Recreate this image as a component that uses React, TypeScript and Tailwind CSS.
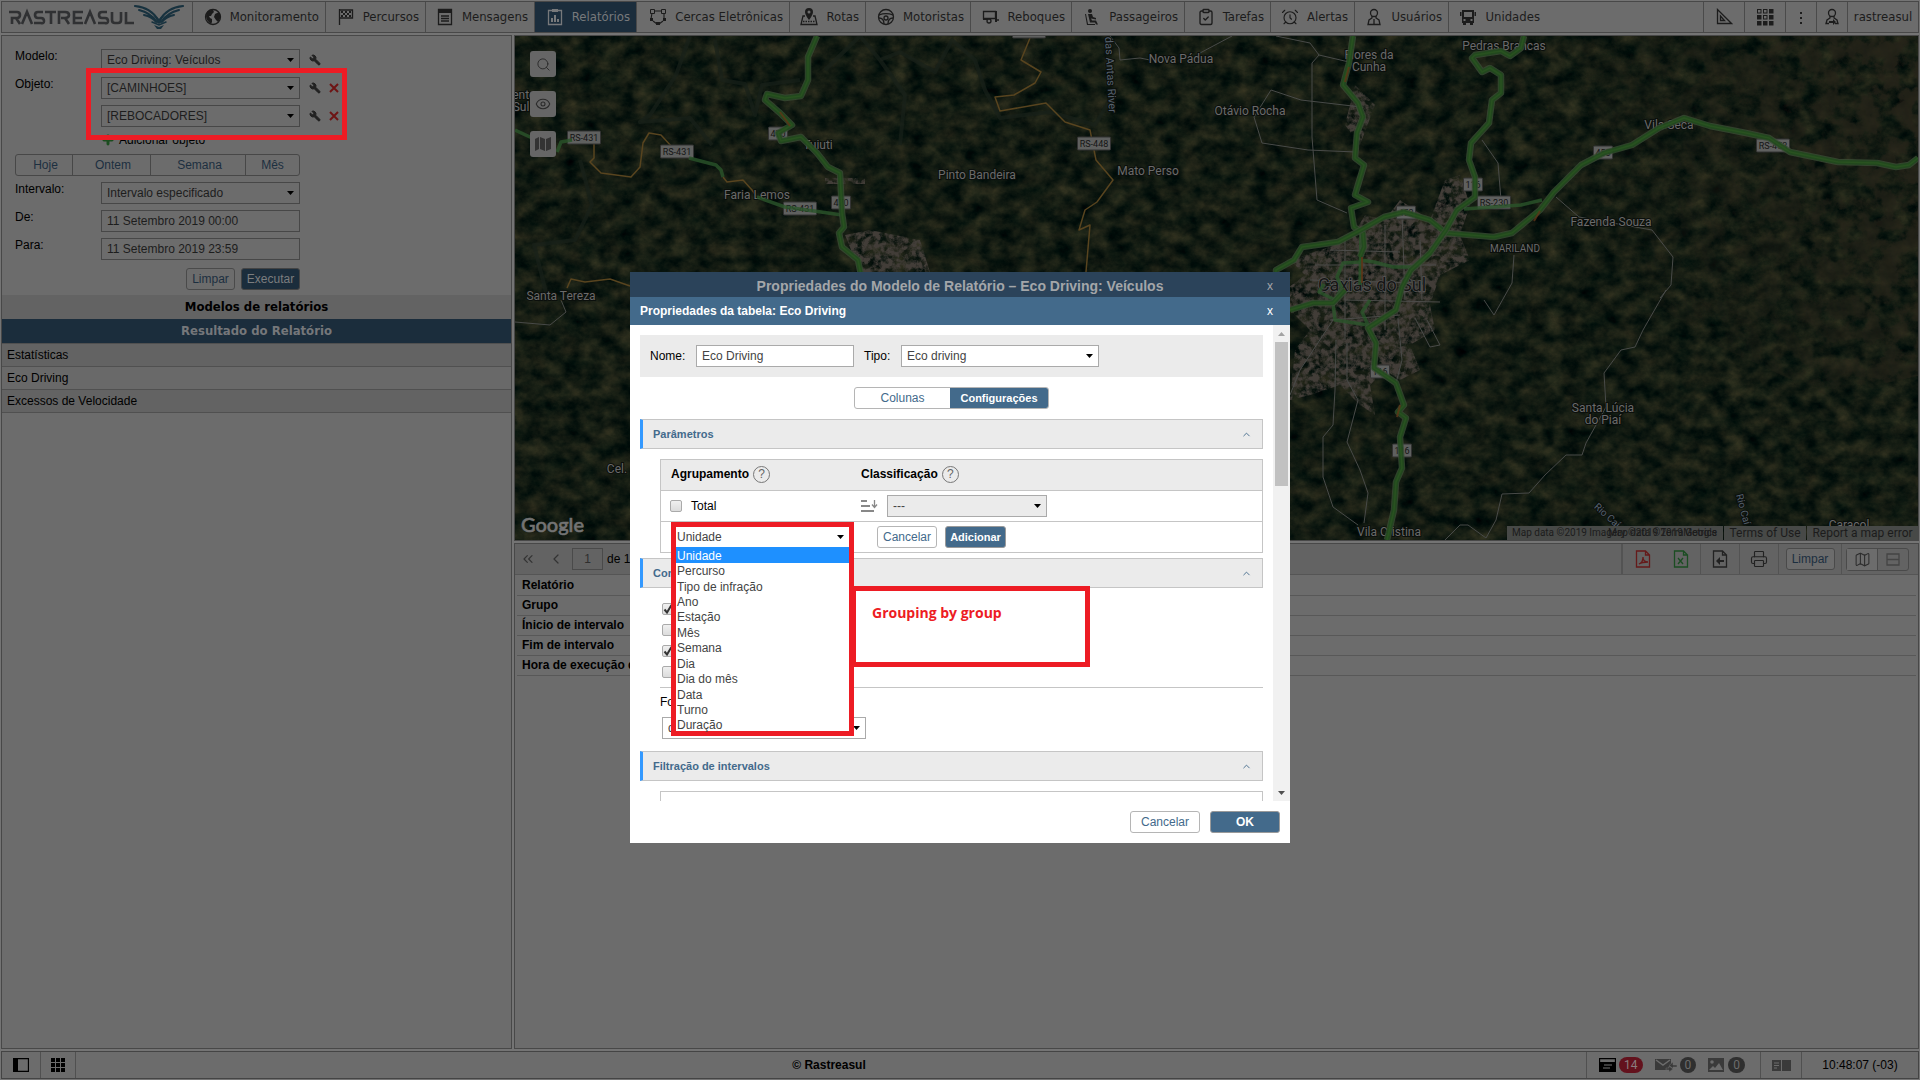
import type { ReactNode } from "react";
import {
  AlarmClock,
  ChevronLeft,
  ChevronsLeft,
  ChevronUp,
  ClipboardCheck,
  Eye,
  Map as MapIcon,
  Plus,
  Printer,
  Search,
  Wrench,
} from "lucide-react";

const stroke = { fill: "none", stroke: "currentColor", strokeWidth: 1.3 };

function Svg({ children, w = 18, h = 18, className = "" }: { children: ReactNode; w?: number; h?: number; className?: string }) {
  return (
    <svg width={w} height={h} viewBox={`0 0 ${w} ${h}`} className={`shrink-0 ${className}`} aria-hidden="true">
      {children}
    </svg>
  );
}

const icons = {
  globe: (
    <Svg>
      <circle cx="9" cy="9" r="7.5" {...stroke} />
      <path d="M3 4c2-2 4-2 6-2l1 2-2 2-1 2-2 0 1 2 2 1 0 3-1 2C4 14 2 11 2 8zM11 6l4-2c2 3 2 7-1 10l-2-2-2-3z" fill="currentColor" />
    </Svg>
  ),
  flag: (
    <Svg>
      <path d="M2.5 1v16M2.5 2h13v8h-13" {...stroke} />
      <path d="M4 3h2v2H4zM8 3h2v2H8zM12 3h2v2h-2zM6 5h2v2H6zM10 5h2v2h-2zM4 7h2v2H4zM8 7h2v2H8zM12 7h2v2h-2z" fill="currentColor" />
    </Svg>
  ),
  message: (
    <Svg>
      <path d="M2.5 1.5h13v15h-13zM5 8h8M5 10.500h8M5 13h8" {...stroke} />
      <path d="M2 1h14v4H2z" fill="currentColor" />
    </Svg>
  ),
  report: (
    <Svg>
      <path d="M2.500 2.500h13v14h-13z" {...stroke} />
      <path d="M6 1h6v3H6zM5 10h2v4H5zM8 7h2v7H8zM11 11h2v3h-2z" fill="currentColor" />
    </Svg>
  ),
  fence: (
    <Svg>
      <path d="M3 3h12M3 5l-1 6M15 5l0 6M4 13l4 3M14 13l-4 3" {...stroke} strokeWidth={1.1} />
      <path d="M1.500 1.500h4v4h-4zM12.500 1.500h4v4h-4z" fill="#6c6c6c" stroke="currentColor" />
      <path d="M1 10h3v3H1zM14 10h3v3h-3zM7 14h4v3H7z" fill="currentColor" />
    </Svg>
  ),
  route: (
    <Svg>
      <path d="M5 8H3L1 16.500h16L15 8h-2" {...stroke} />
      <path d="M3 13.500h12" {...stroke} strokeDasharray="1.500 1" />
      <path d="M9 0a4 4 0 0 1 4 4c0 3-4 8-4 8S5 7 5 4a4 4 0 0 1 4-4zm0 2.500a1.500 1.500 0 1 0 0 3 1.500 1.500 0 0 0 0-3z" fill="currentColor" fillRule="evenodd" />
    </Svg>
  ),
  wheel: (
    <Svg>
      <circle cx="9" cy="9" r="7.500" {...stroke} />
      <circle cx="9" cy="10" r="2" {...stroke} />
      <path d="M2 7c4-1.500 10-1.500 14 0M2 10c3 0 5 2 5 6M16 10c-3 0-5 2-5 6" {...stroke} />
    </Svg>
  ),
  trailer: (
    <Svg>
      <path d="M1.500 3.500h12v7h-12zM14 12h3" {...stroke} />
      <path d="M13 3h2v11h-2zM1 10h4v2H1z" fill="currentColor" />
      <circle cx="7" cy="13" r="2" {...stroke} />
    </Svg>
  ),
  passenger: (
    <Svg>
      <circle cx="7" cy="3" r="2" fill="currentColor" />
      <path d="M5 6l4 0 1 3 3 1v1.500l-5-1 1 2 4 0 2 4h-2l-1-2H7zM3 6l2 10h7v1H4L2 6z" fill="currentColor" />
    </Svg>
  ),
  user: (
    <Svg>
      <circle cx="9" cy="5" r="3.500" {...stroke} />
      <path d="M7 8v2l-3 2-1 4.500h12L14 12l-3-2V8M9 11v5" {...stroke} />
    </Svg>
  ),
  bus: (
    <Svg>
      <path d="M3 2h12v13h-1v2h-3v-2H7v2H4v-2H3zm2 2v5h8V4zM1 4h1.500v4H1zM15.500 4H17v4h-1.500zM4.500 11v2h2v-2zM11.500 11v2h2v-2z" fill="currentColor" fillRule="evenodd" />
    </Svg>
  ),
};

const navItems = [
  { label: "Monitoramento", icon: icons.globe, width: "w-[133px]" },
  { label: "Percursos", icon: icons.flag, width: "w-[100px]" },
  { label: "Mensagens", icon: icons.message, width: "w-[109px]" },
  { label: "Relatórios", icon: icons.report, width: "w-[102px]", active: true },
  { label: "Cercas Eletrônicas", icon: icons.fence, width: "w-[153px]" },
  { label: "Rotas", icon: icons.route, width: "w-[76px]" },
  { label: "Motoristas", icon: icons.wheel, width: "w-[105px]" },
  { label: "Reboques", icon: icons.trailer, width: "w-[101px]" },
  { label: "Passageiros", icon: icons.passenger, width: "w-[113px]" },
  { label: "Tarefas", icon: <ClipboardCheck size={18} strokeWidth={1.8} />, width: "w-[86px]" },
  { label: "Alertas", icon: <AlarmClock size={18} strokeWidth={1.5} />, width: "w-[84px]" },
  { label: "Usuários", icon: icons.user, width: "w-[94px]" },
  { label: "Unidades", icon: icons.bus, width: "w-[97px]", last: true },
];

function Logo() {
  return (
    <a href="#" aria-label="Rastreasul" className="flex w-[191px] shrink-0 items-center border-r border-[#4a4a4a] pl-[6px]">
      <svg width="178" height="26" viewBox="0 0 178 26" aria-hidden="true">
        <g fill="none" stroke="#303133" strokeWidth="2.600">
          <path d="M1 8h8q3 0 3 3t-3 3H4v6M8 14l4 6M14 20l5-12 5 12M35 8h-5q-3 0-3 3t3 3h3q3 0 3 3t-3 2h-7M37 8h11M43 8v12M51 20V8h6q4 0 4 3t-4 3h-4M57 14l4 6M75 8h-9v11h9M66 14h8M77 20l5-12 5 12M99 8h-5q-3 0-3 3t3 3h3q3 0 3 3t-3 2h-7M104 8v8q0 3 3 3h3q3 0 3-3V8M118 8v11h8" />
        </g>
        <g fill="none" stroke="#18323f" strokeLinecap="round">
          <path d="M127 2c10 1 18 5 23 14M175 2c-10 1-18 5-23 14" strokeWidth="2.200" />
          <path d="M131 6c8 2 13 5 17 11M171 6c-8 2-13 5-17 11M136 11c5 1 9 3 12 7M166 11c-5 1-9 3-12 7" strokeWidth="2" />
          <path d="M144 18l7 3 7-3" strokeWidth="1.500" />
        </g>
        <path d="M149 13l2 2 2-2 1 5-3 2-3-2zM146 21l5 2 5-2-3 4h-4z" fill="#18323f" />
      </svg>
    </a>
  );
}

// filled squares of the 3x3 apps glyph
const appSquares = [false, false, true, true, false, true, true, true, true];

function TopBar() {
  return (
    <header className="m-px flex h-8 border border-[#484848] bg-[#6c6c6c] font-['DejaVu_Sans_Condensed','DejaVu_Sans',sans-serif] text-[13px] text-[#1c1c1c]">
      <Logo />
      <nav className="flex min-w-0 flex-1">
        {navItems.map((item) => (
          <a
            key={item.label}
            href="#"
            className={`flex shrink-0 items-center justify-end gap-2 whitespace-nowrap pr-[6px] ${item.width} ${
              item.active ? "bg-[#1b2d3c] text-[#77797b]" : ""
            } ${item.last ? "" : "border-r border-[#4a4a4a]"}`}
          >
            {item.icon}
            {item.label}
          </a>
        ))}
      </nav>
      <button aria-label="Ferramentas" className="flex w-[41px] items-center justify-center border-l border-[#4a4a4a]">
        <Svg>
          <path d="M2.500 1.500v14h14zM5.500 8v4.500h4z" {...stroke} />
        </Svg>
      </button>
      <button aria-label="Aplicativos" className="flex w-[41px] items-center justify-center border-l border-[#4a4a4a]">
        <Svg w={17} h={17}>
          {appSquares.map((filled, i) => (
            <rect key={i} x={0.5 + (i % 3) * 6} y={0.5 + Math.floor(i / 3) * 6} width="3.500" height="3.500" fill={filled ? "currentColor" : "none"} stroke="currentColor" />
          ))}
        </Svg>
      </button>
      <button aria-label="Mais" className="flex w-[31px] items-center justify-center border-l border-[#4a4a4a]">
        <Svg w={4}>
          <path d="M1 4h2v2H1zM1 9h2v2H1zM1 14h2v2H1z" fill="currentColor" />
        </Svg>
      </button>
      <button aria-label="Conta" className="flex w-[31px] items-center justify-center border-l border-[#4a4a4a]">
        <Svg>
          <circle cx="9" cy="5" r="3.500" {...stroke} />
          <path d="M7 8v2l-3 2-1 3.500h3M11 8v2l3 2 1 3.500h-3" {...stroke} />
          <path d="M6 13h4v-2l3 3-3 3v-2H6z" fill="currentColor" />
        </Svg>
      </button>
      <a href="#" className="flex w-[71px] items-center justify-center border-l border-[#4a4a4a]">
        rastreasul
      </a>
    </header>
  );
}

function Caret({ className = "" }: { className?: string }) {
  return (
    <svg width="7" height="4" viewBox="0 0 7 4" className={`pointer-events-none absolute top-1/2 -mt-[2px] ${className || "right-[6px]"}`} aria-hidden="true">
      <path d="M0 0h7L3.500 4z" fill="#000" />
    </svg>
  );
}

function Select({ id, value, className = "", label }: { id?: string; value: string; className?: string; label?: string }) {
  return (
    <div className={`relative h-[22px] shrink-0 ${className}`}>
      <select id={id} aria-label={label} defaultValue={value} className="h-full w-full appearance-none border border-inherit bg-transparent px-[5px] outline-none">
        <option>{value}</option>
      </select>
      <Caret />
    </div>
  );
}

function ObjectTools({ removable = false }: { removable?: boolean }) {
  return (
    <>
      <button aria-label="Configurar" className="ml-[9px]">
        <Wrench size={12} fill="currentColor" className="-scale-x-100 text-[#222]" />
      </button>
      {removable && (
        <button aria-label="Remover" className="ml-2">
          <Svg w={10} h={10}>
            <path d="M1 1l8 8M9 1L1 9" stroke="#6e1414" strokeWidth="2" />
          </Svg>
        </button>
      )}
    </>
  );
}

function FormRow({ label, id, children }: { label?: string; id: string; children: ReactNode }) {
  return (
    <div className="flex h-7 items-start">
      <label htmlFor={id} className="w-[86px] shrink-0">
        {label}
      </label>
      <div className="flex h-[22px] items-center">{children}</div>
    </div>
  );
}

const darkField = "w-[199px] border-[#474747] text-[#1d1d1d]";

function ReportPanel() {
  return (
    <aside className="flex w-[511px] shrink-0 flex-col border border-[#484848] bg-[#6c6c6c]">
      <form className="px-[13px] pt-[13px]" onSubmit={(e) => e.preventDefault()}>
        <FormRow label="Modelo:" id="modelo">
          <Select id="modelo" value="Eco Driving: Veículos" className={darkField} />
          <ObjectTools />
        </FormRow>
        <div className="relative">
          <FormRow label="Objeto:" id="objeto-1">
            <Select id="objeto-1" value="[CAMINHOES]" className={darkField} />
            <ObjectTools removable />
          </FormRow>
          <FormRow id="objeto-2">
            <Select id="objeto-2" label="Objeto 2" value="[REBOCADORES]" className={darkField} />
            <ObjectTools removable />
          </FormRow>
          <div className="absolute -top-[9px] left-[71px] z-10 h-[72px] w-[261px] border-5 border-[#ed1c24]" />
        </div>
        <button className="ml-[86px] flex h-[21px] items-start gap-1">
          <Plus size={14} strokeWidth={5} className="text-[#1b4d1f]" />
          Adicionar objeto
        </button>
        <div className="flex h-[22px] w-[285px] rounded-[3px] border border-[#474747] text-[#1c2f40]">
          <button className="w-14 pl-[3px]">Hoje</button>
          <button className="w-[78px] border-l border-[#474747] pl-[3px]">Ontem</button>
          <button className="w-[95px] border-l border-[#474747] pl-[3px]">Semana</button>
          <button className="flex-1 border-l border-[#474747]">Mês</button>
        </div>
        <div className="pt-[6px]">
          <FormRow label="Intervalo:" id="intervalo">
            <Select id="intervalo" value="Intervalo especificado" className={darkField} />
          </FormRow>
          <FormRow label="De:" id="de">
            <input id="de" defaultValue="11 Setembro 2019 00:00" className={`h-[22px] border px-[5px] ${darkField}`} />
          </FormRow>
          <FormRow label="Para:" id="para">
            <input id="para" defaultValue="11 Setembro 2019 23:59" className={`h-[22px] border px-[5px] ${darkField}`} />
          </FormRow>
        </div>
        <div className="mt-[2px] mb-[5px] flex w-[285px] justify-end gap-[6px]">
          <button className="h-[22px] w-[49px] rounded-[3px] border border-[#4a4a4a] text-[#1c2f40]">Limpar</button>
          <button className="h-[22px] w-[59px] rounded-[3px] border border-[#444] bg-[#1b2d3c] text-[#7b7d7f]">Executar</button>
        </div>
      </form>
      <div className="font-['DejaVu_Sans_Condensed','DejaVu_Sans',sans-serif] text-[13px] font-bold leading-6 text-black">
        <h2 className="bg-[#636363] text-center">Modelos de relatórios</h2>
        <h2 className="bg-[#1b2d3c] text-center text-[#75777a]">Resultado do Relatório</h2>
      </div>
      <ul className="border-t border-[#505050] leading-[22px] text-black">
        {["Estatísticas", "Eco Driving", "Excessos de Velocidade"].map((name) => (
          <li key={name} className="border-b border-[#505050] px-[5px] odd:bg-[#636363] even:bg-[#696969]">
            {name}
          </li>
        ))}
      </ul>
    </aside>
  );
}

// highways drawn with the traffic layer on top
const highways = [
  "817,36 808,57 808,80 801,96 785,98 767,94 765,100 780,113 792,125 778,133 781,141 801,137 817,153 828,167 840,173 842,213 844,227 839,233 842,247 858,260 861,275",
  "1353,36 1349,63 1343,85 1358,103 1363,117 1357,133 1355,158 1364,165 1355,195 1368,202 1351,208 1354,227 1363,233 1364,247 1360,257",
  "1276,280 1276,270 1294,260 1302,247 1338,242 1361,230 1384,217 1404,212 1430,220 1446,233 1494,237 1512,233 1540,210 1554,192 1581,165 1604,153 1632,145 1659,128 1684,118 1710,126 1746,133 1769,138 1790,152 1838,162 1877,163 1896,167 1909,165 1918,158",
  "1524,36 1521,48 1510,56 1501,51 1475,55 1472,58 1482,72 1490,68 1501,75 1501,93 1492,100 1489,123 1471,143 1469,160 1475,177 1475,197 1457,210 1446,230 1430,253 1411,270 1402,287 1396,310 1368,328 1376,343 1374,368 1396,383 1404,405 1398,412 1406,418 1400,437 1402,468 1396,482 1394,510 1387,540",
  "1290,310 1313,303 1333,303 1345,290",
];

const mainRoads = [
  "515,130 530,137 545,144",
  "557,152 561,142 572,140",
  "689,158 716,165 721,170 723,177",
  "757,197 785,207 821,212 842,215",
  "1464,209 1521,205 1542,200",
  "1361,233 1360,285",
  "1360,260 1374,262 1393,267 1413,267",
  "1360,262 1343,263 1337,277 1342,288 1333,303 1335,320 1368,325 1362,312 1370,300",
  "1335,300 1319,292 1324,284",
];

const yellowRoads = [
  "594,143 594,158 590,162 601,173 631,177 640,167 643,143 649,133 661,135 672,147 689,158",
  "723,177 727,182 743,180 752,190 757,197",
  "1030,38 1021,60 1041,72 1035,83 1014,95 995,97 1000,111 1046,103 1065,122 1090,130 1096,160 1113,180 1097,202 1085,210 1079,230 1090,225 1086,272",
  "567,288 571,279 585,282 610,279 630,286",
];

const grayRoads = [
  "1666,290 1643,330 1635,347 1621,350 1604,373 1606,407 1586,443 1582,455 1566,455 1545,475 1529,493 1502,494 1496,520 1486,538 1468,525 1460,525 1445,540",
  "1336,340 1335,390 1333,425 1323,437 1323,477 1333,507 1358,525",
  "1347,343 1347,380 1358,400 1347,442 1360,470 1368,493 1364,523",
  "1110,36 1119,48 1120,60 1140,58 1150,60",
  "1200,53 1232,36",
  "1276,36 1310,43 1319,55 1349,62",
  "1319,55 1312,63 1312,137 1317,200 1347,213",
  "1254,117 1271,90 1301,100 1361,107",
  "1254,117 1262,143 1308,150 1356,152",
  "1482,140 1498,163 1501,200",
  "1556,197 1579,217 1652,230 1673,257 1671,285 1660,298",
  "1514,255 1512,283 1494,315 1484,300",
  "1398,318 1402,360 1396,383",
  "1427,320 1440,345 1430,347 1415,318",
  "1290,395 1300,370 1333,320",
  "515,322 550,325 566,312 561,300",
];

const cityStreets = [
  "1315,265 1436,265",
  "1310,280 1420,283",
  "1330,250 1400,252",
  "1345,300 1440,302",
  "1385,225 1385,330",
  "1345,240 1345,340",
  "1402,212 1405,300",
  "1420,240 1422,300",
  "1330,320 1400,315",
];

const rivers = [
  "690,36 676,75 650,115 640,122 690,118 712,145",
  "715,40 722,80 745,84 755,115 762,85 800,80",
  "825,70 860,36 880,60 905,95 900,145",
  "880,60 900,52 935,72 952,40 975,60 985,90 1000,118 1050,112 1095,125 1110,100",
  "580,160 592,205 575,240 534,245 548,300",
];

const towns: [string, number, number, number?][] = [
  ["Tuiuti", 818, 149],
  ["Nova Pádua", 1181, 63],
  ["Pinto Bandeira", 977, 179],
  ["Mato Perso", 1148, 175],
  ["Faria Lemos", 757, 199],
  ["Santa Tereza", 561, 300],
  ["Otávio Rocha", 1250, 115],
  ["Flores da", 1369, 59],
  ["Cunha", 1369, 71],
  ["Pedras Brancas", 1504, 50],
  ["Vila Seca", 1669, 129],
  ["Fazenda Souza", 1611, 226],
  ["MARILAND", 1515, 252, 10],
  ["Caxias do Sul", 1372, 291, 18],
  ["Santa Lúcia", 1603, 412],
  ["do Piaí", 1603, 424],
  ["Vila Cristina", 1389, 536],
  ["Cel.", 617, 473],
  ["ento", 524, 99],
  ["Sul", 521, 111],
  ["Caracol", 1849, 529],
];

const shields: [string, number, number, number][] = [
  ["RS-431", 584, 138, 33],
  ["RS-431", 677, 152, 33],
  ["RS-431", 800, 209, 33],
  ["RS-448", 1094, 144, 33],
  ["RS-230", 1494, 203, 33],
  ["RS-453", 1773, 146, 33],
  ["470", 778, 134, 19],
  ["470", 841, 203, 19],
  ["453", 1406, 213, 19],
  ["453", 1603, 153, 19],
  ["116", 1473, 185, 19],
  ["116", 1380, 372, 19],
  ["116", 1402, 451, 19],
  ["", 1029, 32, 33],
];

function SatelliteMap() {
  return (
    <svg viewBox="515 36 1403 504" preserveAspectRatio="xMinYMin slice" className="absolute inset-0 h-full w-full" aria-label="Mapa">
      <defs>
        <filter id="terrain" x="0" y="0" width="100%" height="100%" colorInterpolationFilters="sRGB">
          <feTurbulence type="fractalNoise" baseFrequency="0.055 0.070" numOctaves="6" seed="8" />
          <feColorMatrix values="0.28 0.10 0 0 -0.115  0.20 0.10 0 0 -0.045  0.12 0.06 0 0 -0.020  0 0 0 0 1" />
        </filter>
        <filter id="fields" x="0" y="0" width="100%" height="100%" colorInterpolationFilters="sRGB">
          <feTurbulence type="fractalNoise" baseFrequency="0.050" numOctaves="5" seed="21" />
          <feColorMatrix values="0 0 0 0 0.150  0 0 0 0 0.140  0 0 0 0 0.100  0 6 0 0 -2.500" result="patches" />
          <feComposite in="patches" in2="SourceGraphic" operator="in" />
        </filter>
        <filter id="city" x="-20%" y="-20%" width="140%" height="140%" colorInterpolationFilters="sRGB">
          <feTurbulence type="fractalNoise" baseFrequency="0.160" numOctaves="4" seed="4" />
          <feColorMatrix values="0 0 0 0 0.260  0 0 0 0 0.240  0 0 0 0 0.220  1.500 3 0 0 -1.700" result="blocks" />
          <feComposite in="blocks" in2="SourceGraphic" operator="in" />
        </filter>
        <linearGradient id="east" x1="0" x2="1" y1="0.3" y2="0">
          <stop offset="0" stopColor="#fff" stopOpacity="0" />
          <stop offset="1" stopColor="#fff" stopOpacity="0.900" />
        </linearGradient>
      </defs>
      <rect x="515" y="36" width="1403" height="504" fill="#101a13" filter="url(#terrain)" />
      <path d="M1560 36h358v340l-90 20-110-50-90-60-20-120z" fill="url(#east)" filter="url(#fields)" />
      <path
        d="M1350 240l15-25 20 5 15-20 30 20 15-40 15-5 10 30-10 30 10 25-30 15-10 30 5 25-25 15 10 25-20 10-15-10-15 15 5 30-15-10-20-20-30 10-20 5 5-50 15-20-20-20-5-20 20-15-15-15 30-10z"
        fill="#fff"
        filter="url(#city)"
      />
      <path d="M845 235l25-5 50 10 10 32h-70zM825 178h40v6h-40zM1355 85l20 20-15 40-15-20z" fill="#fff" filter="url(#city)" />
      <g fill="none" strokeLinejoin="round">
        {rivers.map((p) => (
          <polyline key={p} points={p} stroke="#182119" strokeWidth="4" strokeOpacity="0.700" />
        ))}
        {grayRoads.map((p) => (
          <polyline key={p} points={p} stroke="#484a48" />
        ))}
        {cityStreets.map((p) => (
          <polyline key={p} points={p} stroke="#4c4c4a" />
        ))}
        {yellowRoads.map((p) => (
          <polyline key={p} points={p} stroke="#58441f" strokeWidth="1.500" />
        ))}
      </g>
      {shields.map(([name, x, y, w], i) => (
        <g key={i}>
          <rect x={x - w / 2} y={y - 7} width={w} height="13" rx="1" fill="#5f605f" stroke="#333" strokeWidth="1" />
          <text x={x} y={y + 3} textAnchor="middle" fontSize="9" fill="#151515">
            {name}
          </text>
        </g>
      ))}
      <g fontSize="12" fill="#6a6a6a" stroke="#0b0f0c" strokeWidth="2" paintOrder="stroke" textAnchor="middle">
        {towns.map(([name, x, y, size]) =>
          size === 18 ? (
            <text key={name} x={x} y={y} fontSize="18" fill="#151515" stroke="#565656" strokeWidth="1.500">
              {name}
            </text>
          ) : (
            <text key={name} x={x} y={y} fontSize={size}>
              {name}
            </text>
          )
        )}
        <text fontSize="11" fill="#55606c" transform="translate(1107 75) rotate(87)">das Antas River</text>
        <text fontSize="10" fill="#55606c" transform="translate(1605 518) rotate(42)">Rio Caí</text>
        <text fontSize="10" fill="#55606c" transform="translate(1740 510) rotate(75)">Rio Caí</text>
      </g>
      <g fill="none" strokeLinejoin="round" strokeOpacity="0.800">
        {mainRoads.map((p) => (
          <polyline key={p} points={p} stroke="#2a552b" strokeWidth="3.500" />
        ))}
        {highways.map((p) => (
          <g key={p}>
            <polyline points={p} stroke="#3a4c35" strokeWidth="6.500" />
            <polyline points={p} stroke="#1f4a1b" strokeWidth="4.500" />
            <polyline points={p} stroke="#2b5521" strokeWidth="1.500" />
          </g>
        ))}
        <path d="M1349 67l-4 15M780 112l10 14M1540 211l-6 10M1362 257v26M1400 405l-3 12" stroke="#5f3416" strokeWidth="2" />
      </g>
      <text x="521" y="532" fontSize="20" fontWeight="500" fill="#737373" stroke="#737373" strokeWidth="0.600" fontFamily="Lato, sans-serif">
        Google
      </text>
    </svg>
  );
}

function MapView() {
  return (
    <section className="relative h-[506px] shrink-0 overflow-hidden border border-[#484848] bg-[#101a13] font-['Roboto',sans-serif]">
      <SatelliteMap />
      <div className="absolute top-[15px] left-[15px] flex flex-col gap-[14px] text-[#2a2a2a]">
        <button aria-label="Buscar" className="flex h-[26px] w-[26px] items-center justify-center rounded-[3px] bg-[#666]">
          <Search size={15} strokeWidth={1.5} />
        </button>
        <button aria-label="Visibilidade" className="flex h-[26px] w-[26px] items-center justify-center rounded-[3px] bg-[#666]">
          <Eye size={16} strokeWidth={1.6} />
        </button>
        <button aria-label="Camadas" className="flex h-[26px] w-[26px] items-center justify-center rounded-[3px] bg-[#666]">
          <Svg w={16} h={14}>
            <path d="M0 2l4-2v12l-4 2zM5 0l5 2v12l-5-2zM11 2l5-2v12l-5 2z" fill="#333" />
          </Svg>
        </button>
      </div>
      <div className="absolute right-0 bottom-0 flex h-[14px] items-center gap-px text-[12px] leading-[14px] whitespace-nowrap text-[#1c1c1c]">
        <span className="relative h-full w-[216px] bg-[#474947] px-[5px] text-[10px]">
          Map data ©2019 Imagery ©2019 TerraMetrics
          <span className="absolute right-[6px]">Map data ©2019 Google</span>
        </span>
        <a href="#" className="h-full w-[82px] bg-[#474947] text-center">Terms of Use</a>
        <a href="#" className="h-full w-[111px] bg-[#474947] text-center">Report a map error</a>
      </div>
    </section>
  );
}

function FileGlyph({ color, children }: { color: string; children: ReactNode }) {
  return (
    <Svg w={16} className={color}>
      <path d="M1.500 1h9l4 4v12h-13zM10.500 1v4h4" {...stroke} />
      {children}
    </Svg>
  );
}

function ReportResult() {
  return (
    <section className="flex min-h-0 flex-1 flex-col border border-[#484848] bg-[#6c6c6c]">
      <div className="flex h-[31px] items-center border-b border-[#555] bg-[#636363] pl-[5px]">
        <button aria-label="Primeira página" className="w-4 text-[#333]">
          <ChevronsLeft size={16} strokeWidth={1.8} />
        </button>
        <button aria-label="Página anterior" className="ml-3 w-4 text-[#333]">
          <ChevronLeft size={16} strokeWidth={1.8} />
        </button>
        <input aria-label="Página" defaultValue="1" className="ml-2 h-[22px] w-[31px] border border-[#4a4a4a] text-center text-[#2e2e2e]" />
        <span className="ml-1">de 1</span>
        <div className="ml-auto flex h-full items-center">
          <div className="flex h-full items-center border-l-2 border-[#535353]">
            <button aria-label="Exportar para PDF" className="flex w-[39px] justify-center">
              <FileGlyph color="text-[#651a1a]">
                <path d="M4 14c3-1 4-4 4-7 0 3 2 5 5 5-3 0-6 0-9 2z" {...stroke} />
              </FileGlyph>
            </button>
            <button aria-label="Exportar para Excel" className="flex w-[38px] justify-center">
              <FileGlyph color="text-[#1b4d22]">
                <path d="M5 8l5 6M10 8l-5 6" {...stroke} />
              </FileGlyph>
            </button>
          </div>
          <button aria-label="Importar" className="flex h-full w-[39px] items-center justify-center border-l border-[#535353]">
            <FileGlyph color="text-[#222]">
              <path d="M12 10H8V7l-4 4 4 4v-3h4z" fill="currentColor" />
            </FileGlyph>
          </button>
          <button aria-label="Imprimir" className="flex h-full w-[39px] items-center justify-center border-l border-[#535353]">
            <Printer size={18} strokeWidth={1.5} className="text-[#222]" />
          </button>
          <div className="flex h-full w-[63px] items-center justify-center border-l border-[#535353]">
            <button className="h-[22px] w-[49px] rounded-[3px] border border-[#4a4a4a] bg-[#6c6c6c] text-[#1c2f40]">Limpar</button>
          </div>
          <div className="flex h-full w-[77px] items-center border-l border-[#535353] pl-1">
            <div className="flex h-[23px] w-[63px] rounded-[3px] border border-[#4a4a4a] text-[#2c2c2c]">
              <button aria-label="Mostrar mapa" className="flex flex-1 items-center justify-center bg-[#6c6c6c]">
                <MapIcon size={17} strokeWidth={1.5} />
              </button>
              <button aria-label="Dividir" className="flex flex-1 items-center justify-center border-l border-[#4a4a4a] text-[#444]">
                <Svg w={14} h={13}>
                  <path d="M1 1h12v11H1zM1 6.500h12" {...stroke} />
                </Svg>
              </button>
            </div>
          </div>
        </div>
      </div>
      <table className="mx-[2px] mt-px border-collapse text-left leading-[19px] text-black">
        <tbody>
          {["Relatório", "Grupo", "Ínicio de intervalo", "Fim de intervalo", "Hora de execução do relatório"].map((name) => (
            <tr key={name} className="border-b border-[#585858]">
              <th className="px-[5px] py-0 font-bold">{name}</th>
            </tr>
          ))}
        </tbody>
      </table>
    </section>
  );
}

function CountBadge({ children, color }: { children: ReactNode; color: string }) {
  return <span className={`flex h-4 items-center justify-center rounded-full px-[5px] leading-4 font-['Roboto',sans-serif] ${color}`}>{children}</span>;
}

function StatusBar() {
  return (
    <footer className="mx-px mb-px flex h-7 items-stretch border border-[#444] bg-[#6c6c6c] text-black">
      <button aria-label="Alternar painel" className="flex w-[39px] items-center justify-center border-r border-[#505050]">
        <Svg w={16} h={14}>
          <path d="M.5.5h15v13H.5z" {...stroke} />
          <path d="M0 0h5v14H0z" fill="currentColor" />
        </Svg>
      </button>
      <button aria-label="Aplicativos" className="flex w-[35px] items-center justify-center border-r border-[#505050]">
        <Svg w={14} h={14}>
          <path d="M0 0h4v4H0zM5 0h4v4H5zM10 0h4v4h-4zM0 5h4v4H0zM5 5h4v4H5zM10 5h4v4h-4zM0 10h4v4H0zM5 10h4v4H5zM10 10h4v4h-4z" fill="currentColor" />
        </Svg>
      </button>
      <strong className="flex flex-1 items-center justify-center pr-1">© Rastreasul</strong>
      <div className="flex w-[174px] items-center border-l border-[#505050] pl-3">
        <Svg w={17} h={14}>
          <path d="M.5.5h16v13H.5z" {...stroke} />
          <path d="M0 4h17v10H0z" fill="currentColor" />
          <path d="M5 7h8M4 10h7" stroke="#777" />
        </Svg>
        <span className="ml-[3px] pb-px">
          <CountBadge color="bg-[#63121d] text-[#8a7c7e]">14</CountBadge>
        </span>
        <Svg w={22} h={14} className="ml-3 text-[#3a3a3a]">
          <path d="M0 1h16v5l-4 6H0z" fill="currentColor" />
          <path d="M1 2l7 5 7-5" fill="none" stroke="#6c6c6c" strokeWidth="1.500" />
          <path d="M22 7h-4V4l-4 3.500 4 3V9h4zM11 10h3V8l4 3-4 3v-2h-3z" fill="currentColor" stroke="#6c6c6c" strokeWidth=".5" />
        </Svg>
        <span className="ml-[3px] pb-px">
          <CountBadge color="bg-[#2f2f2f] text-[#6c6c6c]">0</CountBadge>
        </span>
        <Svg w={16} h={14} className="ml-3 text-[#3a3a3a]">
          <path d="M0 0h16v14H0z" fill="currentColor" />
          <circle cx="4" cy="4" r="1.800" fill="#6c6c6c" />
          <path d="M1 12l4-4 2 2 4-5 4 7z" fill="#6c6c6c" />
        </Svg>
        <span className="ml-1 pb-px">
          <CountBadge color="bg-[#2f2f2f] text-[#6c6c6c]">0</CountBadge>
        </span>
      </div>
      <button aria-label="Colunas" className="flex w-[41px] items-center justify-center border-l border-[#505050] text-[#3a3a3a]">
        <Svg w={19} h={11}>
          <path d="M0 0h9v11H0zM10 0h9v11h-9z" fill="currentColor" />
          <path d="M2 3h5M2 5.500h5M2 8h3" stroke="#6c6c6c" />
        </Svg>
      </button>
      <time className="flex w-[117px] items-center justify-center border-l border-[#505050]">10:48:07 (-03)</time>
    </footer>
  );
}

function SectionHeader({ title }: { title: string }) {
  return (
    <button className="flex h-[30px] w-full items-center justify-between border border-l-3 border-[#c5c5c5] border-l-[#3399ff] bg-[#ebebeb] pr-[10px] pl-[10px] text-[11px] font-bold text-[#436a8b]">
      {title}
      <ChevronUp size={11} strokeWidth={2} />
    </button>
  );
}

function Help() {
  return (
    <button aria-label="Ajuda" className="flex h-[17px] w-[17px] items-center justify-center rounded-full border border-[#777] font-normal text-[#666]">
      ?
    </button>
  );
}

function Checkbox({ id, checked = false, label }: { id: string; checked?: boolean; label?: string }) {
  return (
    <span className="relative flex h-3 w-3 shrink-0">
      <input
        id={id}
        type="checkbox"
        aria-label={label}
        defaultChecked={checked}
        className="h-3 w-3 appearance-none rounded-[2px] border border-[#aaa] bg-linear-to-b from-[#f0f0f0] to-[#dcdcdc]"
      />
      {checked && (
        <svg width="10" height="10" viewBox="0 0 10 10" className="pointer-events-none absolute top-px left-px" aria-hidden="true">
          <path d="M1.500 5.500l2.500 3L8.500 1" fill="none" stroke="#333" strokeWidth="2" />
        </svg>
      )}
    </span>
  );
}

const groupings = ["Unidade", "Percurso", "Tipo de infração", "Ano", "Estação", "Mês", "Semana", "Dia", "Dia do mês", "Data", "Turno", "Duração"];

function GroupingDropdown() {
  return (
    <div className="absolute top-0 left-[10px] z-10 h-[214px] w-[183px] border-5 border-[#ed1c24] bg-white px-px text-[#444]">
      <button className="relative block h-[20px] w-full text-left">
        Unidade
        <Caret className="right-1" />
      </button>
      <ul role="listbox" className="-mx-px flex h-[186px] flex-col">
        {groupings.map((name, i) => (
          <li key={name} role="option" aria-selected={i === 0} className={`flex flex-1 items-center px-px ${i === 0 ? "bg-[#1e90ff] pt-px text-white" : ""}`}>
            {name}
          </li>
        ))}
      </ul>
    </div>
  );
}

function Scrollbar() {
  return (
    <div className="flex w-[17px] shrink-0 flex-col items-center justify-between bg-[#f1f1f1]">
      <div className="flex flex-col items-center">
        <Svg w={17} h={17}>
          <path d="M5 11h7L8.500 7z" fill="#a3a3a3" />
        </Svg>
        <div className="h-[144px] w-[13px] bg-[#c1c1c1]" />
      </div>
      <Svg w={17} h={17}>
        <path d="M5 7h7l-3.500 4z" fill="#505050" />
      </Svg>
    </div>
  );
}

const lightButton = "h-[22px] rounded-[3px] border border-[#b5b5b5] bg-white text-[#436a8b]";
const blueButton = "h-[22px] rounded-[3px] border border-[#9a9a9a] bg-[#436a8b] font-bold text-white";

function TableDialog() {
  return (
    <div role="dialog" aria-label="Propriedades da tabela: Eco Driving" className="absolute top-[272px] left-1/2 w-[660px] -translate-x-1/2 text-black">
      <div className="relative flex h-[25px] items-center justify-center bg-[#2b435a] pt-[3px] text-[14px] font-bold text-[#a3a6a9]">
        Propriedades do Modelo de Relatório – Eco Driving: Veículos
        <button aria-label="Fechar modelo" className="absolute right-[17px] text-[12px] font-normal">x</button>
      </div>
      <div className="flex h-7 items-center justify-between bg-[#436a8b] pr-[17px] pl-[10px] font-bold text-white">
        Propriedades da tabela: Eco Driving
        <button aria-label="Fechar" className="font-normal">x</button>
      </div>
      <div className="flex h-[476px] overflow-hidden bg-white">
        <div className="min-w-0 flex-1 pt-[10px] pr-[10px] pl-[10px]">
          <div className="flex h-[42px] items-center bg-[#ebebeb] px-[10px]">
            <label htmlFor="nome" className="w-[46px]">Nome:</label>
            <input id="nome" defaultValue="Eco Driving" className="h-[22px] w-[158px] border border-[#aaa] bg-white px-[5px] text-[#444]" />
            <label htmlFor="tipo" className="ml-[10px] w-[37px]">Tipo:</label>
            <Select id="tipo" value="Eco driving" className="w-[198px] border-[#aaa] bg-white text-[#444]" />
          </div>
          <div className="mx-auto mt-[10px] flex h-[22px] w-[195px] overflow-hidden rounded-[3px] border border-[#b5b5b5]">
            <button className="w-[95px] text-[#436a8b]">Colunas</button>
            <button className="flex-1 bg-[#436a8b] text-[11px] font-bold text-white">Configurações</button>
          </div>
          <div className="mt-[10px]">
            <SectionHeader title="Parâmetros" />
          </div>
          <div className="mt-[10px] ml-5 border border-[#c5c5c5]">
            <div className="flex h-[31px] items-center border-b border-[#c5c5c5] bg-[#ebebeb] pb-[2px] pl-[10px] font-bold">
              <span className="flex w-[190px] items-center gap-1">
                Agrupamento <Help />
              </span>
              <span className="flex items-center gap-1">
                Classificação <Help />
              </span>
            </div>
            <div className="flex h-[31px] items-center border-b border-[#c5c5c5] pl-[9px]">
              <Checkbox id="total" />
              <label htmlFor="total" className="ml-[9px] w-[170px]">Total</label>
              <Svg w={17} h={13} className="text-[#888]">
                <path d="M0 0h6v2H0zM0 5h9v2H0zM0 10h13v2H0z" fill="currentColor" />
                <path d="M13.500 0v7M11 4.500l2.500 3 2.500-3" {...stroke} />
              </Svg>
              <Select label="Classificação" value="---" className="ml-[9px] w-[160px] border-[#aaa] bg-[#ebebeb] text-[#444]" />
            </div>
            <div className="relative flex h-[30px] items-center gap-2 pl-[216px]">
              <GroupingDropdown />
              <button className={`w-[60px] ${lightButton}`}>Cancelar</button>
              <button className={`w-[61px] text-[11px] ${blueButton}`}>Adicionar</button>
              <div className="absolute top-[64px] left-[190px] h-[81px] w-[239px] border-5 border-[#ed1c24] bg-white px-4 py-[15px] font-['Open_Sans',sans-serif] text-[14px] font-bold text-[#ed1c24]">
                Grouping by group
              </div>
            </div>
          </div>
          <div className="mt-[5px]">
            <SectionHeader title="Configurações" />
          </div>
          <div className="ml-5 flex flex-col gap-[9px] border-b border-[#c5c5c5] pt-[15px] pb-[9px] pl-[2px]">
            <Checkbox id="opt-1" checked label="Opção 1" />
            <Checkbox id="opt-2" label="Opção 2" />
            <Checkbox id="opt-3" checked label="Opção 3" />
            <Checkbox id="opt-4" label="Opção 4" />
          </div>
          <div className="ml-5 pt-[7px]">
            <label htmlFor="formato" className="block h-[22px]">Formato</label>
            <Select id="formato" value="dd" className="ml-[2px] w-[204px] border-[#aaa] text-[#444]" />
          </div>
          <div className="mt-3">
            <SectionHeader title="Filtração de intervalos" />
          </div>
          <div className="mt-[10px] ml-5 h-[34px] border border-[#c5c5c5] px-[10px] leading-[28px] font-bold">Duração</div>
        </div>
        <Scrollbar />
      </div>
      <div className="flex h-[42px] items-start justify-end gap-[10px] bg-white pt-[10px] pr-[10px]">
        <button className={`w-[70px] ${lightButton}`}>Cancelar</button>
        <button className={`w-[70px] ${blueButton}`}>OK</button>
      </div>
    </div>
  );
}

export default function App() {
  return (
    <div className="relative flex h-screen flex-col overflow-hidden bg-[#747474] font-['Liberation_Sans',Arial,sans-serif] text-[12px] leading-[14px] text-black">
      <TopBar />
      <main className="mx-px mt-px mb-[2px] flex min-h-0 flex-1 gap-[2px]">
        <ReportPanel />
        <div className="flex min-w-0 flex-1 flex-col gap-[2px]">
          <MapView />
          <ReportResult />
        </div>
      </main>
      <StatusBar />
      <TableDialog />
    </div>
  );
}
